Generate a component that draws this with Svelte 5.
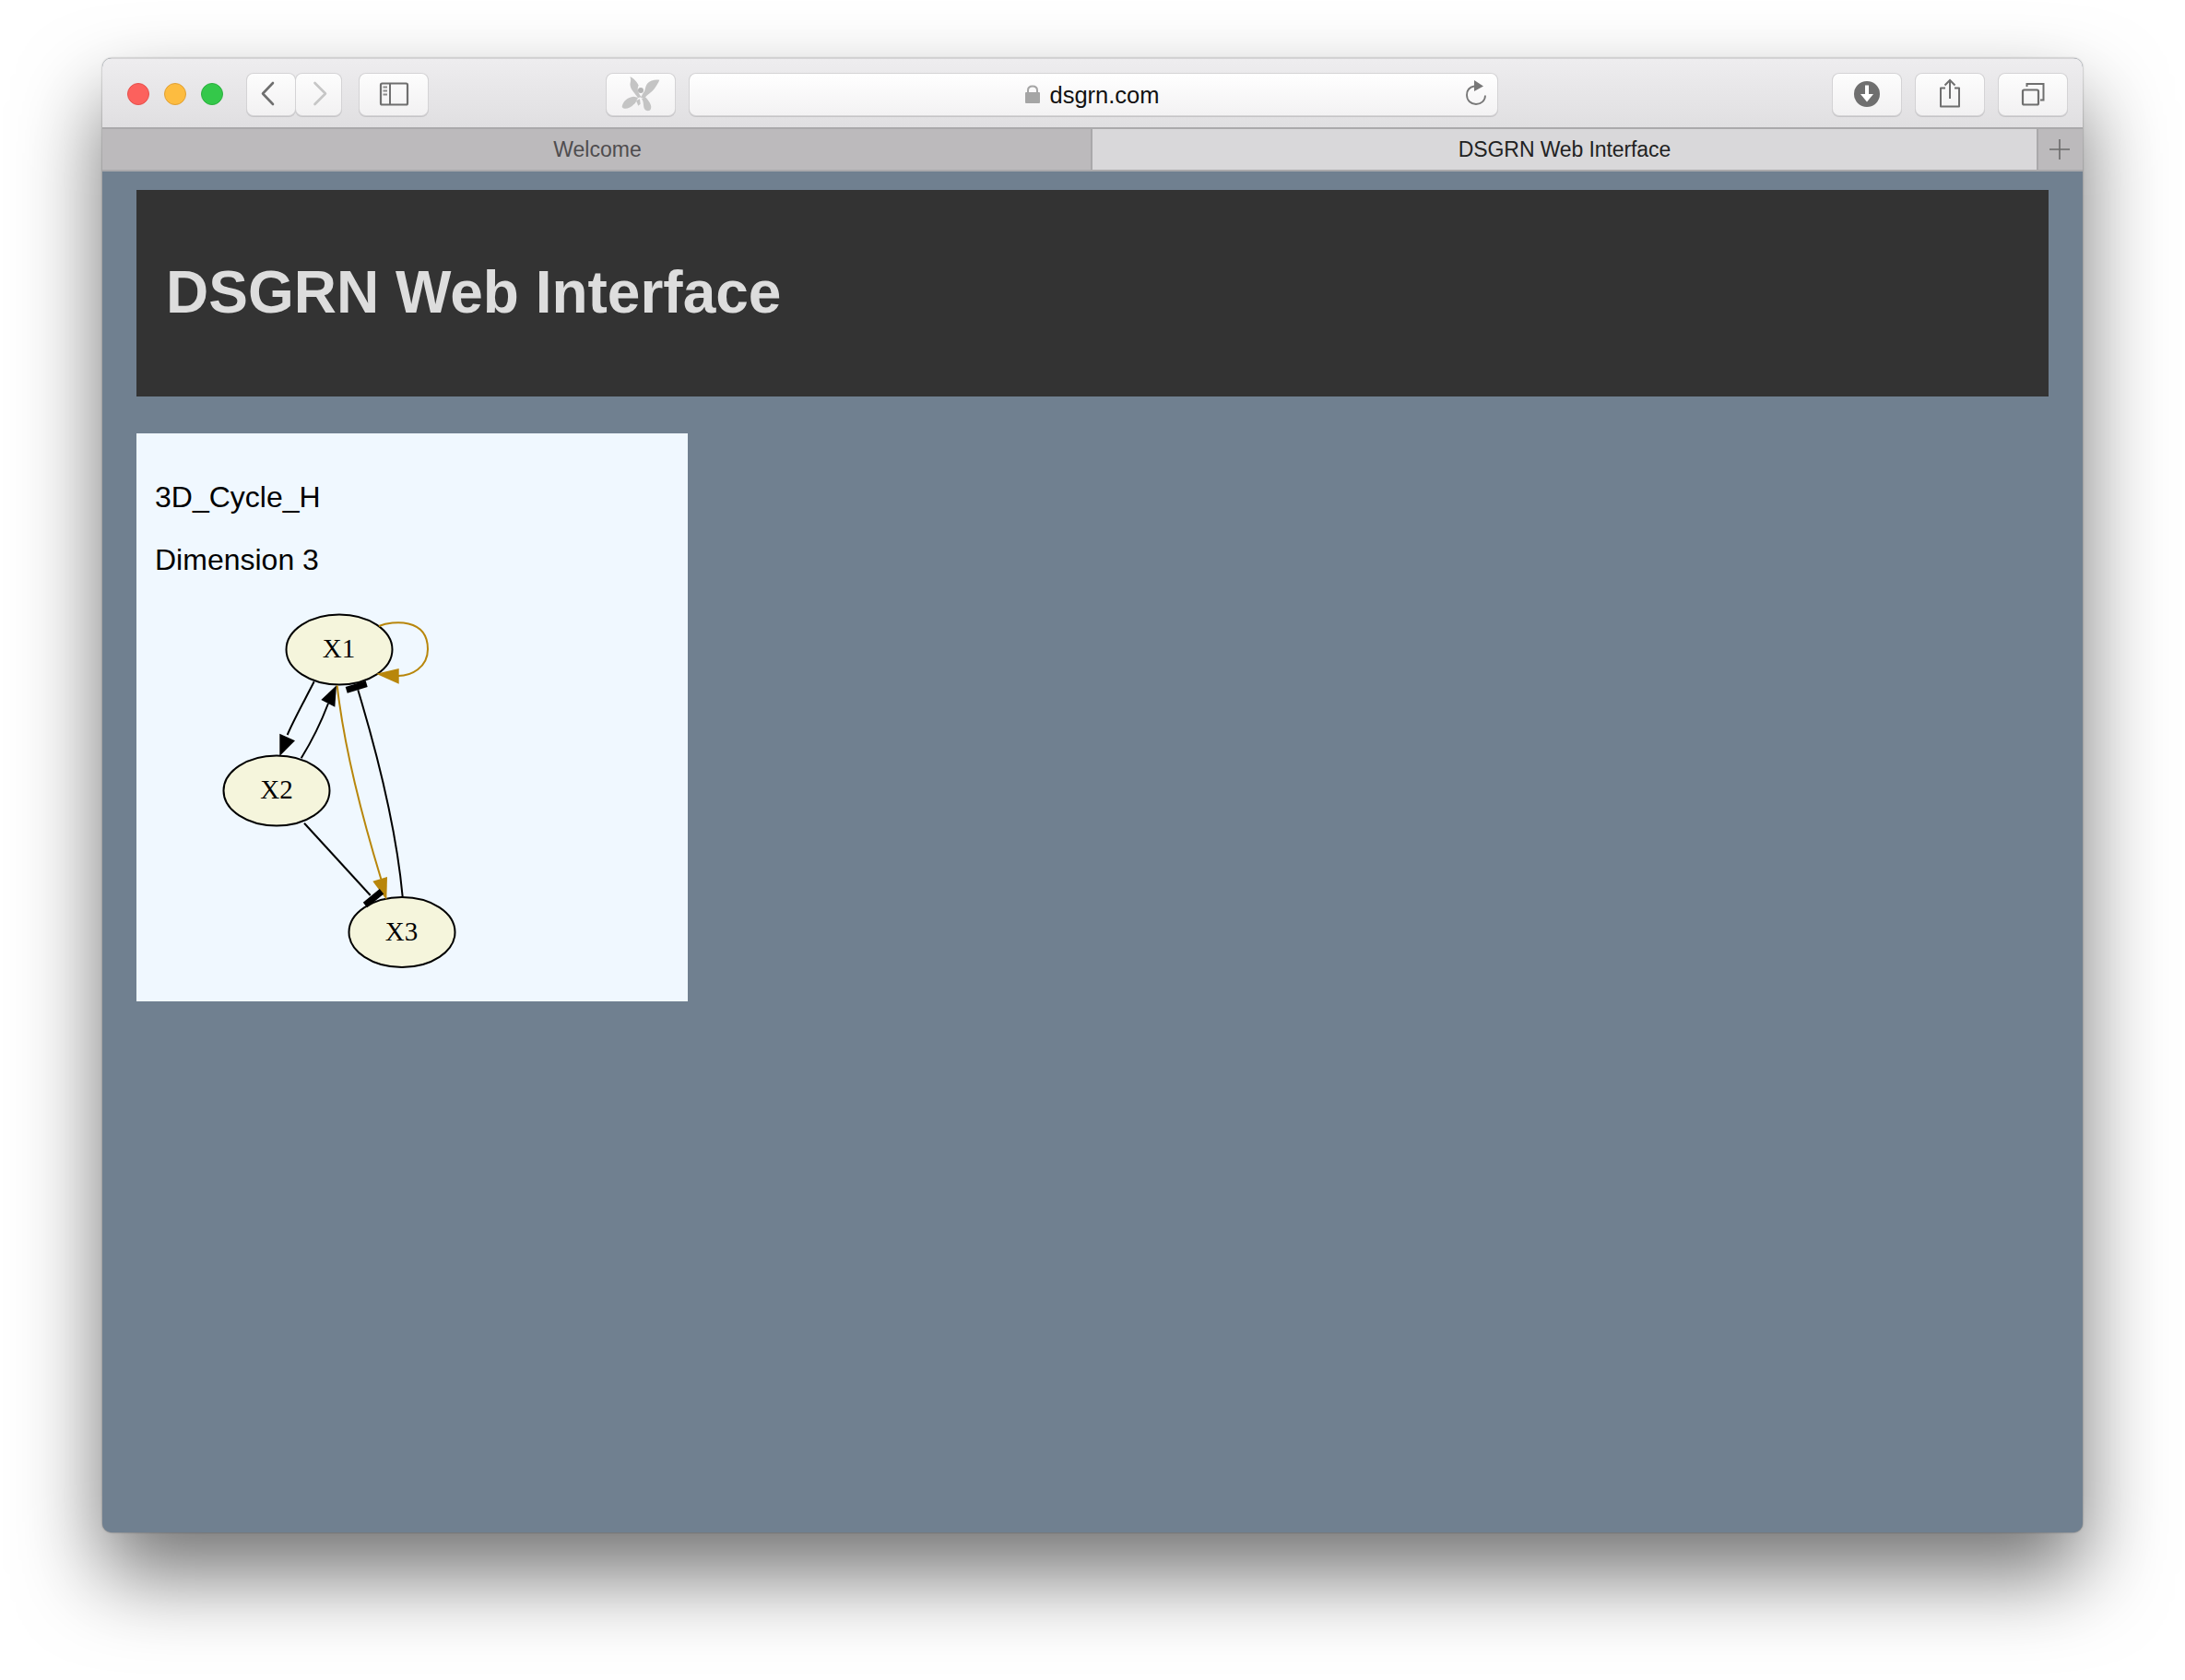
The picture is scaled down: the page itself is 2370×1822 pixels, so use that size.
<script>
	const ink = '#6f6f6f';
	const gold = '#b8860b';
</script>

<div class="page">
	<div class="window">
		<div class="toolbar">
			<div class="lights">
				<span class="light red"></span>
				<span class="light yellow"></span>
				<span class="light green"></span>
			</div>
			<div class="btn back">
				<svg width="52" height="45" viewBox="268 80 52 45"><path d="M296 90 L285 101.5 L296 113" fill="none" stroke={ink} stroke-width="2.6" stroke-linecap="round" stroke-linejoin="round"/></svg>
			</div>
			<div class="btn forward">
				<svg width="49" height="45" viewBox="321 80 49 45"><path d="M341.5 90 L353 101.5 L341.5 113" fill="none" stroke="#c6c6c6" stroke-width="2.6" stroke-linecap="round" stroke-linejoin="round"/></svg>
			</div>
			<div class="btn sidebar">
				<svg width="74" height="45" viewBox="390 80 74 45">
					<rect x="413" y="90.5" width="29" height="23" rx="1.5" fill="none" stroke={ink} stroke-width="2.2"/>
					<path d="M423 90.5 V113.5" stroke={ink} stroke-width="2"/>
					<path d="M415.5 94.5 H420 M415.5 98.5 H420 M415.5 102.5 H420" stroke="#8a8a8a" stroke-width="2"/>
				</svg>
			</div>
			<div class="btn logo">
				<svg width="74" height="45" viewBox="24 24 222 135" fill="#c4c4c4">
					<path d="M100 34 C112 38 122 50 128 62 C122 72 126 86 138 100 L126 102 C116 88 104 78 101 64 C99 52 106 46 100 34 Z"/>
					<path d="M196 44 C180 42 166 46 156 56 C148 68 152 76 142 88 L135 102 L146 104 C156 92 172 84 180 72 C186 62 192 54 196 44 Z"/>
					<circle cx="135" cy="78" r="9" fill="#b4b4b4"/>
					<path d="M74 132 C76 114 92 100 112 98 L128 102 C120 106 122 118 112 124 C100 138 80 142 74 132 Z"/>
					<path d="M138 106 L150 100 C162 112 172 128 168 138 C164 148 152 146 147 138 C142 128 146 116 138 106 Z"/>
					<path d="M120 112 L132 106 L134 122 L127 128 Z"/>
				</svg>
			</div>
			<div class="address">
				<svg class="lock" width="16" height="20" viewBox="0 0 16 20">
					<path d="M3 9 V6 C3 3 5 1.5 8 1.5 C11 1.5 13 3 13 6 V9" fill="none" stroke="#a5a5a5" stroke-width="2"/>
					<rect x="0" y="8" width="16" height="12" rx="1" fill="#a5a5a5"/>
				</svg>
				<span class="url">dsgrn.com</span>
				<svg class="reload" width="28" height="30" viewBox="0 0 28 30">
					<path d="M11 7.5 C6 8.5 3 12 3 17 C3 23 7.5 27 13 27 C18.5 27 23 23 23 17.5" fill="none" stroke="#777" stroke-width="1.8"/>
					<path d="M11 1 L21 7.5 L11 13 Z" fill="#777"/>
				</svg>
			</div>
			<div class="btn download">
				<svg width="74" height="45" viewBox="0 0 74 45">
					<circle cx="37" cy="22" r="14" fill={ink}/>
					<path d="M37 12.5 V24.5" stroke="#fff" stroke-width="4"/>
					<path d="M30 22 H44 L37 30.5 Z" fill="#fff"/>
				</svg>
			</div>
			<div class="btn share">
				<svg width="74" height="45" viewBox="0 0 74 45">
					<path d="M32 15.5 H27 V35.5 H47 V15.5 H42" fill="none" stroke={ink} stroke-width="2" stroke-linejoin="round"/>
					<path d="M37 7 V27 M31.5 12.5 L37 7 L42.5 12.5" fill="none" stroke={ink} stroke-width="2"/>
				</svg>
			</div>
			<div class="btn tabs">
				<svg width="74" height="45" viewBox="0 0 74 45">
					<rect x="26" y="17.5" width="17" height="16" rx="1.5" fill="none" stroke={ink} stroke-width="2.2"/>
					<path d="M30.5 14 V11 H48.5 V28.5 H45" fill="none" stroke={ink} stroke-width="2"/>
				</svg>
			</div>
		</div>

		<div class="tabbar">
			<div class="tab">Welcome</div>
			<div class="tab active">DSGRN Web Interface</div>
			<div class="plus">
				<svg width="24" height="24" viewBox="0 0 24 24"><path d="M12 1 V23 M1 12 H23" stroke="#6a6a6a" stroke-width="1.6"/></svg>
			</div>
		</div>

		<div class="content">
			<header class="banner">
				<h1>DSGRN Web Interface</h1>
			</header>
			<section class="panel">
				<p>3D_Cycle_H</p>
				<p>Dimension 3</p>
				<svg class="graph" width="300" height="460" viewBox="220 640 300 460">
					<ellipse cx="368" cy="704.5" rx="57.5" ry="38" fill="#f5f5dc" stroke="#000" stroke-width="2"/>
					<ellipse cx="300" cy="857.5" rx="57.5" ry="38" fill="#f5f5dc" stroke="#000" stroke-width="2"/>
					<ellipse cx="436" cy="1011" rx="57.5" ry="38" fill="#f5f5dc" stroke="#000" stroke-width="2"/>
					<text x="367.5" y="713">X1</text>
					<text x="300" y="866">X2</text>
					<text x="435.5" y="1020">X3</text>

					<!-- X1 self loop -->
					<path d="M411 679 C426 673 464 670 464 704 C464 724 446 733 432 733" fill="none" stroke={gold} stroke-width="2"/>
					<path d="M408 730.7 L432.7 725 L432.7 741.7 Z" fill={gold}/>

					<!-- X1 to X2 -->
					<path d="M340.7 739.3 C328 764 318 782 311.7 797" fill="none" stroke="#000" stroke-width="2"/>
					<path d="M303.3 820 L303.3 795.7 L320 803.3 Z" fill="#000"/>

					<!-- X2 to X1 -->
					<path d="M326.7 822.3 C338 804 348 784 356 763" fill="none" stroke="#000" stroke-width="2"/>
					<path d="M365 743.3 L348.3 759 L363.3 766.7 Z" fill="#000"/>

					<!-- X3 to X1, repressing -->
					<path d="M436.7 972.7 C430 900 410 820 388.3 748.3" fill="none" stroke="#000" stroke-width="2"/>
					<path d="M375.7 748.3 L397.7 741.7" stroke="#000" stroke-width="7"/>

					<!-- X1 to X3 -->
					<path d="M365.7 743.3 C373 810 394 890 413.3 953.3" fill="none" stroke={gold} stroke-width="2"/>
					<path d="M419.3 976 L404.3 955.7 L420 951 Z" fill={gold}/>

					<!-- X2 to X3, repressing -->
					<path d="M330 892.7 L401.7 971" fill="none" stroke="#000" stroke-width="2"/>
					<path d="M396 981.5 L414 966.7" stroke="#000" stroke-width="7"/>
				</svg>
			</section>
		</div>
	</div>
</div>

<style>
	:global(body) {
		margin: 0;
		background: #fff;
	}
	.page {
		width: 2370px;
		height: 1822px;
		padding: 63px 111px 0;
		box-sizing: border-box;
		overflow: hidden;
		font-family: "Liberation Sans", Arial, sans-serif;
	}
	.window {
		height: 1599px;
		border-radius: 10px;
		overflow: hidden;
		background: #708090;
		display: flex;
		flex-direction: column;
		box-shadow: 0 46px 90px rgba(0, 0, 0, 0.55), 0 0 2px rgba(0, 0, 0, 0.45);
	}
	.toolbar {
		height: 75px;
		box-sizing: border-box;
		padding: 2px 17px 0 27px;
		display: flex;
		align-items: center;
		background: linear-gradient(#eeedef, #e0dfe1);
		border-top: 1px solid #d6d5d7;
	}
	.lights {
		display: flex;
		gap: 16px;
		margin-right: 26px;
		margin-top: -1px;
	}
	.light {
		width: 24px;
		height: 24px;
		border-radius: 50%;
		box-sizing: border-box;
	}
	.red {
		background: #fc615d;
		border: 1px solid #e5504c;
	}
	.yellow {
		background: #fdbc40;
		border: 1px solid #e0a035;
	}
	.green {
		background: #34c84a;
		border: 1px solid #2bb03e;
	}
	.btn {
		height: 45px;
		width: 74px;
		box-sizing: border-box;
		background: linear-gradient(#fdfdfd, #f2f1f2);
		border-radius: 7px;
		box-shadow: 0 0 0 1px #d4d3d5, 0 1px 0 1px #c6c5c7;
		display: flex;
		align-items: center;
		justify-content: center;
		flex: none;
	}
	.btn svg {
		display: block;
	}
	.back {
		width: 52px;
	}
	.forward {
		width: 49px;
		margin-left: 1px;
	}
	.sidebar {
		margin-left: 20px;
		margin-right: 194px;
	}
	.address {
		position: relative;
		width: 876px;
		height: 45px;
		margin: 0 364px 0 16px;
		flex: none;
		background: linear-gradient(#fff, #f3f2f3);
		border-radius: 7px;
		box-shadow: 0 0 0 1px #d4d3d5, 0 1px 0 1px #c6c5c7;
		display: flex;
		align-items: center;
		justify-content: center;
		gap: 10px;
	}
	.url {
		font-size: 25.5px;
		color: #111;
		margin-top: 2px;
	}
	.lock {
		display: block;
		margin-bottom: 1px;
		margin-left: -2px;
	}
	.reload {
		position: absolute;
		right: 8px;
		top: 6px;
	}
	.share,
	.tabs {
		margin-left: 16px;
	}
	.tabbar {
		height: 48px;
		box-sizing: border-box;
		display: flex;
		border-top: 2px solid #aaa9ab;
		border-bottom: 2px solid #aaa9ab;
		background: #bcbabc;
		font-size: 23px;
	}
	.tab {
		width: 1072px;
		box-sizing: border-box;
		display: flex;
		align-items: center;
		justify-content: center;
		color: #4f4d4f;
		padding-left: 2px;
	}
	.tab.active {
		width: 1028px;
		background: #d9d8da;
		color: #222;
		border-left: 2px solid #a9a8aa;
		border-right: 2px solid #a9a8aa;
		padding-left: 0;
		letter-spacing: -0.1px;
	}
	.plus {
		flex: 1;
		display: flex;
		align-items: center;
		justify-content: center;
		padding-right: 2px;
	}
	.plus svg {
		display: block;
	}
	.content {
		flex: 1;
		padding: 20px 37px 0;
	}
	.banner {
		height: 224px;
		background: #333;
		padding: 0 0 2px 32px;
		box-sizing: border-box;
		display: flex;
		align-items: center;
	}
	h1 {
		margin: 0;
		font-size: 64px;
		line-height: 74px;
		font-weight: 700;
		color: #ddd;
	}
	.panel {
		width: 598px;
		height: 616px;
		box-sizing: border-box;
		margin-top: 40px;
		padding: 19px 20px 0;
		background: #f0f8ff;
	}
	p {
		margin: 32px 0 0;
		font-size: 32px;
		line-height: 36px;
		color: #000;
	}
	.graph {
		display: block;
		margin: 15px 0 0 52px;
		overflow: visible;
	}
	.graph text {
		font-family: "Liberation Serif", "Times New Roman", serif;
		font-size: 29px;
		text-anchor: middle;
		fill: #000;
	}
</style>
